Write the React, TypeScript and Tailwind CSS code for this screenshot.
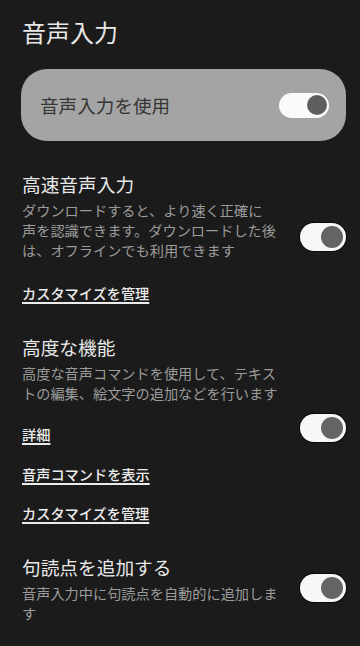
import * as React from "react";

const FONT = { fontFamily: '"Noto Sans CJK JP", "Noto Sans", sans-serif' };

function Toggle({ big = true }: { big?: boolean }) {
  if (!big) {
    return (
      <span className="relative inline-flex h-[25px] w-[50px] shrink-0 items-center rounded-full bg-[#fafafa]">
        <span className="absolute right-[2.5px] h-[20px] w-[20px] rounded-full bg-[#5e5e5e]" />
      </span>
    );
  }
  return (
    <span className="relative inline-flex h-[28px] w-[46px] shrink-0 items-center rounded-full bg-[#f7f7f7] ring-1 ring-black/60">
      <span className="absolute right-[3px] h-[22px] w-[22px] rounded-full bg-[#646464]" />
    </span>
  );
}

function Link({ children, className = "" }: { children: React.ReactNode; className?: string }) {
  return (
    <div
      className={
        "text-[14.2px] leading-[20px] font-medium text-[#ececec] underline decoration-[1.5px] underline-offset-[3px] " +
        className
      }
    >
      {children}
    </div>
  );
}

function Section({
  title,
  lines,
  children,
  className = "",
}: {
  title: string;
  lines: string[];
  children?: React.ReactNode;
  className?: string;
}) {
  return (
    <div className={"flex items-center " + className}>
      <div className="min-w-0 flex-1">
        <div className="text-[18.7px] leading-[27px] text-[#e8e8e8]">{title}</div>
        <div className="mt-[3px] text-[14.2px] leading-[20px] text-[#9b9b9b]">
          {lines.map((l) => (
            <div key={l}>{l}</div>
          ))}
        </div>
        {children}
      </div>
      <Toggle />
    </div>
  );
}

export default function App() {
  return (
    <div className="min-h-[646px] w-[360px] bg-[#1b1b1b] pl-[22px] pr-[14px]" style={FONT}>
      <div className="pt-[16px] text-[24px] leading-[32px] text-[#e8e8e8]">音声入力</div>

      <div className="-ml-[1px] mt-[21px] flex h-[72px] w-[325px] items-center justify-between rounded-[26px] bg-[#a4a4a4] pl-[19px] pr-[17px]">
        <span className="text-[18.6px] text-[#363636]">音声入力を使用</span>
        <Toggle big={false} />
      </div>

      <Section
        className="mt-[29px]"
        title="高速音声入力"
        lines={[
          "ダウンロードすると、より速く正確に",
          "声を認識できます。ダウンロードした後",
          "は、オフラインでも利用できます",
        ]}
      >
        <Link className="mt-[23px]">カスタマイズを管理</Link>
      </Section>

      <Section
        className="mt-[30px]"
        title="高度な機能"
        lines={["高度な音声コマンドを使用して、テキス", "トの編集、絵文字の追加などを行います"]}
      >
        <Link className="mt-[21px]">詳細</Link>
        <Link className="mt-[20px]">音声コマンドを表示</Link>
        <Link className="mt-[19px]">カスタマイズを管理</Link>
      </Section>

      <Section
        className="mt-[30px]"
        title="句読点を追加する"
        lines={["音声入力中に句読点を自動的に追加しま", "す"]}
      />
    </div>
  );
}
